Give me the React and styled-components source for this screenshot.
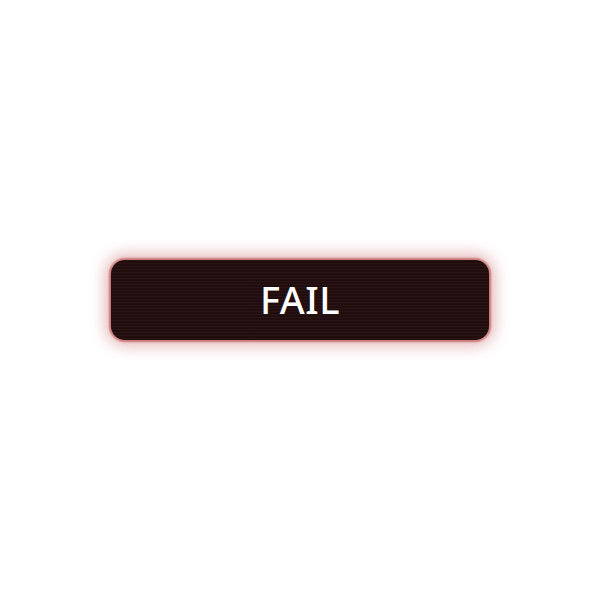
import styled, { createGlobalStyle } from "styled-components";

const Global = createGlobalStyle`
  html, body {
    margin: 0;
    padding: 0;
    background: #ffffff;
  }
  #root {
    height: 600px;
  }
`;

const Page = styled.div`
  height: 600px;
  display: flex;
  align-items: center;
  justify-content: center;
`;

const StatusBadge = styled.div`
  width: 378px;
  height: 80px;
  border-radius: 14px;
  display: flex;
  align-items: center;
  justify-content: center;
  background-color: #210d0e;
  background-image: repeating-linear-gradient(
    to bottom,
    rgba(255, 255, 255, 0.03) 0px,
    rgba(255, 255, 255, 0.03) 1px,
    rgba(0, 0, 0, 0) 1px,
    rgba(0, 0, 0, 0) 3px
  );
  box-shadow: 0 0 2px 2px rgba(170, 50, 50, 0.55), 0 0 16px 5px rgba(185, 60, 60, 0.4);
`;

const Label = styled.span`
  color: #ffffff;
  font-family: "Noto Sans", "Open Sans", sans-serif;
  font-size: 38px;
  font-weight: 500;
  letter-spacing: 0.5px;
  transform: translateY(-1px);
`;

const App = () => {
  return (
    <>
      <Global />
      <Page>
        <StatusBadge>
          <Label>FAIL</Label>
        </StatusBadge>
      </Page>
    </>
  );
};

export default App;
